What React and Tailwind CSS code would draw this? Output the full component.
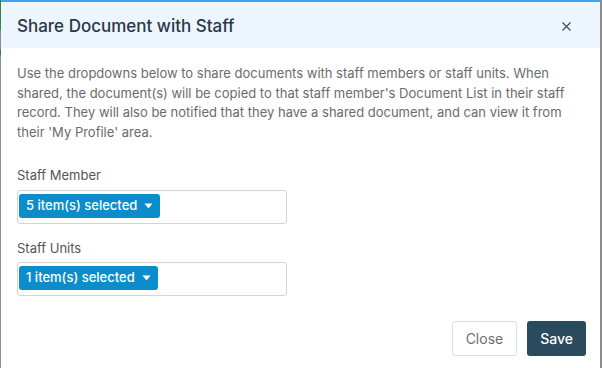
import React from "react";

const Picker = ({ label }) => (
	<div className="w-[270px] h-[34px] border border-[#d4d4d4] rounded-[3px] px-px pt-px">
		<div className="inline-flex items-center gap-[7px] h-[24px] px-[7px] bg-[#0b8ccb] text-white text-[13px] font-medium rounded-[3px]">
			<span>{label}</span>
			<svg width="9" height="6" viewBox="0 0 9 6">
				<path d="M0.5 0.5h8L4.5 5.5z" fill="white" />
			</svg>
		</div>
	</div>
);

export default function App() {
	return (
		<div
			className="w-[602px] h-[368px] flex bg-white"
			style={{ fontFamily: "Inter, 'Noto Sans', sans-serif" }}
		>
			<div className="w-px flex flex-col">
				<div className="h-[30px] bg-[#2e8b3e]" />
				<div className="h-[20px] bg-[#8c8c8c]" />
				<div className="h-[5px] bg-[#2f6fa0]" />
				<div className="flex-1 bg-[#8c8c8c]" />
			</div>
			<div className="flex-1 flex flex-col border-t-2 border-[#3ea3f2]">
				<div className="h-[46px] bg-[#edf5fe] flex items-center justify-between pt-[3px] pl-[16px] pr-[29px]">
					<h1 className="text-[17px] font-medium text-[#2c3747]">
						Share Document with Staff
					</h1>
					<svg width="9" height="9" viewBox="0 0 9 9">
						<path d="M0.5 0.5l8 8M8.5 0.5l-8 8" stroke="#3c4a5c" strokeWidth="1.1" />
					</svg>
				</div>
				<div className="px-[16px] pt-[16px] flex-1 flex flex-col">
					<p className="text-[13px] leading-[19.5px] text-[#6b6b6b] w-[560px]">
						Use the dropdowns below to share documents with staff members or
						staff units. When shared, the document(s) will be copied to that
						staff member's Document List in their staff record. They will also
						be notified that they have a shared document, and can view it from
						their 'My Profile' area.
					</p>
					<div className="mt-[23px] text-[13px] text-[#555] leading-[20px]">
						Staff Member
					</div>
					<div className="mt-[5px]">
						<Picker label="5 item(s) selected" />
					</div>
					<div className="mt-[14px] text-[13px] text-[#555] leading-[20px]">
						Staff Units
					</div>
					<div className="mt-[4px]">
						<Picker label="1 item(s) selected" />
					</div>
					<div className="flex justify-end gap-[10px] mt-[25px] mr-[-2px]">
						<button className="h-[35px] px-[13px] border border-[#dedede] rounded-[3px] text-[14px] text-[#707070] bg-white">
							Close
						</button>
						<button className="h-[35px] px-[13px] rounded-[3px] text-[14px] font-medium text-white bg-[#2a4a5e]">
							Save
						</button>
					</div>
				</div>
			</div>
			<div className="w-[2px] bg-[#8c8c8c]" />
		</div>
	);
}
